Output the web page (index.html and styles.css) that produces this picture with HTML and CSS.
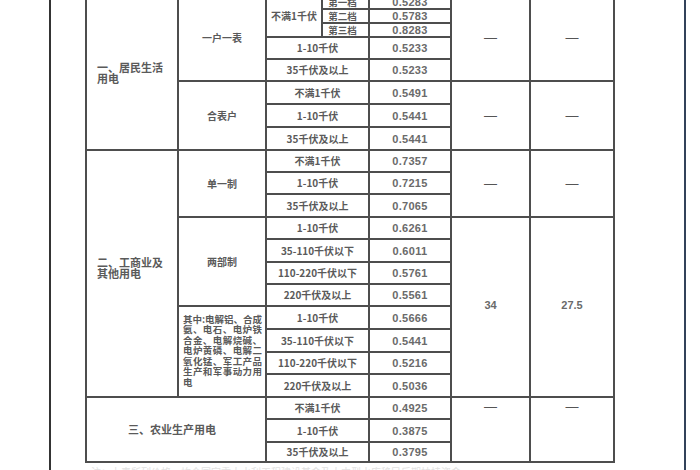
FILE: index.html
```html
<!DOCTYPE html>
<html lang="zh-CN">
<head>
<meta charset="utf-8">
<title>电价表</title>
<link rel="stylesheet" href="styles.css">
</head>
<body>
<div class="page">
  <div class="frame">
    <table class="tariff">
      <colgroup>
        <col class="c1"><col class="c2"><col class="c3a"><col class="c3b"><col class="c4"><col class="c5"><col class="c6">
      </colgroup>
      <tbody>
        <tr class="r14">
          <td class="cat" rowspan="8">一、居民生活<br>用电</td>
          <td class="sub" rowspan="5">一户一表</td>
          <td class="rng" rowspan="3">不满1千伏</td>
          <td class="tier">第一档</td>
          <td class="val">0.5283</td>
          <td class="dash" rowspan="5">—</td>
          <td class="dash" rowspan="5">—</td>
        </tr>
        <tr class="r14"><td class="tier">第二档</td><td class="val">0.5783</td></tr>
        <tr class="r14"><td class="tier">第三档</td><td class="val">0.8283</td></tr>
        <tr class="r22"><td class="rng" colspan="2">1-10千伏</td><td class="val">0.5233</td></tr>
        <tr class="r22"><td class="rng" colspan="2">35千伏及以上</td><td class="val">0.5233</td></tr>

        <tr class="r23">
          <td class="sub" rowspan="3">合表户</td>
          <td class="rng" colspan="2">不满1千伏</td>
          <td class="val">0.5491</td>
          <td class="dash" rowspan="3">—</td>
          <td class="dash" rowspan="3">—</td>
        </tr>
        <tr class="r23"><td class="rng" colspan="2">1-10千伏</td><td class="val">0.5441</td></tr>
        <tr class="r23"><td class="rng" colspan="2">35千伏及以上</td><td class="val">0.5441</td></tr>

        <tr class="r22">
          <td class="cat cat-up" rowspan="11">二、工商业及<br>其他用电</td>
          <td class="sub" rowspan="3">单一制</td>
          <td class="rng" colspan="2">不满1千伏</td>
          <td class="val">0.7357</td>
          <td class="dash" rowspan="3">—</td>
          <td class="dash" rowspan="3">—</td>
        </tr>
        <tr class="r22"><td class="rng" colspan="2">1-10千伏</td><td class="val">0.7215</td></tr>
        <tr class="r23"><td class="rng" colspan="2">35千伏及以上</td><td class="val">0.7065</td></tr>

        <tr class="r22">
          <td class="sub" rowspan="4">两部制</td>
          <td class="rng" colspan="2">1-10千伏</td>
          <td class="val">0.6261</td>
          <td class="num" rowspan="8">34</td>
          <td class="num" rowspan="8">27.5</td>
        </tr>
        <tr class="r23"><td class="rng" colspan="2">35-110千伏以下</td><td class="val">0.6011</td></tr>
        <tr class="r22"><td class="rng" colspan="2">110-220千伏以下</td><td class="val">0.5761</td></tr>
        <tr class="r22"><td class="rng" colspan="2">220千伏及以上</td><td class="val">0.5561</td></tr>

        <tr class="r23">
          <td class="note" rowspan="4"><span class="ln">其中:电解铝、合成</span><span class="ln">氨、电石、电炉铁</span><span class="ln">合金、电解烧碱、</span><span class="ln">电炉黄磷、电解二</span><span class="ln">氧化锰、军工产品</span><span class="ln">生产和军事动力用</span><span class="ln ln-last">电</span></td>
          <td class="rng" colspan="2">1-10千伏</td>
          <td class="val">0.5666</td>
        </tr>
        <tr class="r23"><td class="rng" colspan="2">35-110千伏以下</td><td class="val">0.5441</td></tr>
        <tr class="r22"><td class="rng" colspan="2">110-220千伏以下</td><td class="val">0.5216</td></tr>
        <tr class="r23"><td class="rng" colspan="2">220千伏及以上</td><td class="val">0.5036</td></tr>

        <tr class="r22">
          <td class="cat cat-center" rowspan="3" colspan="2">三、农业生产用电</td>
          <td class="rng" colspan="2">不满1千伏</td>
          <td class="val">0.4925</td>
          <td class="dash dash-top" rowspan="3">—</td>
          <td class="dash dash-top" rowspan="3">—</td>
        </tr>
        <tr class="r23"><td class="rng" colspan="2">1-10千伏</td><td class="val">0.3875</td></tr>
        <tr class="r20"><td class="rng" colspan="2">35千伏及以上</td><td class="val">0.3795</td></tr>
      </tbody>
    </table>
    <p class="footnote">注：上表所列价格，均含国家重大水利工程建设基金及大中型水库移民后期扶持资金</p>
  </div>
</div>
</body>
</html>
```

FILE: styles.css
```css
html, body {
  margin: 0;
  padding: 0;
  background: #ffffff;
}

.page {
  width: 700px;
  height: 470px;
  overflow: hidden;
  display: flex;
  background: #ffffff;
}

.frame {
  margin-left: 49px;
  width: 599px;
  height: 470px;
  border-left: 2px solid #343434;
  border-right: 2px solid #33425a;
  padding-left: 34px;
  box-sizing: content-box;
  overflow: hidden;
}

.tariff {
  margin-top: -4px;
  border-collapse: separate;
  border-spacing: 0;
  table-layout: fixed;
  width: 528px;
  border-left: 2px solid #4e4e4e;
  font-family: "Noto Sans CJK SC", "Noto Sans", sans-serif;
  font-weight: 700;
  color: #5a5a5a;
}

.c1 { width: 92px; }
.c2 { width: 88px; }
.c3a { width: 56px; }
.c3b { width: 47px; }
.c4 { width: 82px; }
.c5 { width: 79px; }
.c6 { width: 84px; }

.tariff td {
  border-right: 2px solid #4e4e4e;
  border-bottom: 2px solid #4e4e4e;
  padding: 0;
  text-align: center;
  vertical-align: middle;
  font-size: 10px;
  line-height: 12px;
  white-space: nowrap;
  overflow: hidden;
}

.r14 { height: 14px; }
.r20 { height: 20px; }
.r22 { height: 22px; }
.r23 { height: 23px; }

.tariff td.cat {
  text-align: left;
  padding-left: 10px;
  font-size: 11px;
  line-height: 11px;
}

.tariff td.cat-up {
  padding-bottom: 12px;
}

.tariff td.cat-center {
  text-align: center;
  padding-left: 0;
  padding-right: 8px;
}

.tariff td.tier {
  font-size: 9.5px;
  line-height: 12px;
  padding-right: 6px;
}

.tariff td.val {
  font-family: "Liberation Sans", Arial, sans-serif;
  font-size: 11px;
  font-weight: 700;
  color: #6a6a6a;
  letter-spacing: 0.3px;
}

.tariff td.dash {
  font-family: "Liberation Sans", Arial, sans-serif;
  font-size: 13px;
  font-weight: 400;
  color: #555555;
}

.tariff td.dash-top {
  vertical-align: top;
  padding-top: 3px;
}

.tariff td.num {
  font-family: "Liberation Sans", Arial, sans-serif;
  font-size: 11px;
  font-weight: 700;
  color: #6a6a6a;
  padding-bottom: 4px;
}

.tariff td.note {
  font-size: 9.5px;
  line-height: 10.5px;
  padding: 0 3px 2px 4px;
}

.ln {
  display: block;
  white-space: nowrap;
  text-align: justify;
  text-align-last: justify;
}

.ln-last {
  text-align: left;
  text-align-last: left;
}

.footnote {
  margin: 3px 0 0 6px;
  font-family: "Noto Sans CJK SC", sans-serif;
  font-size: 10px;
  line-height: 12px;
  color: #e2e2e2;
  white-space: nowrap;
}
```
